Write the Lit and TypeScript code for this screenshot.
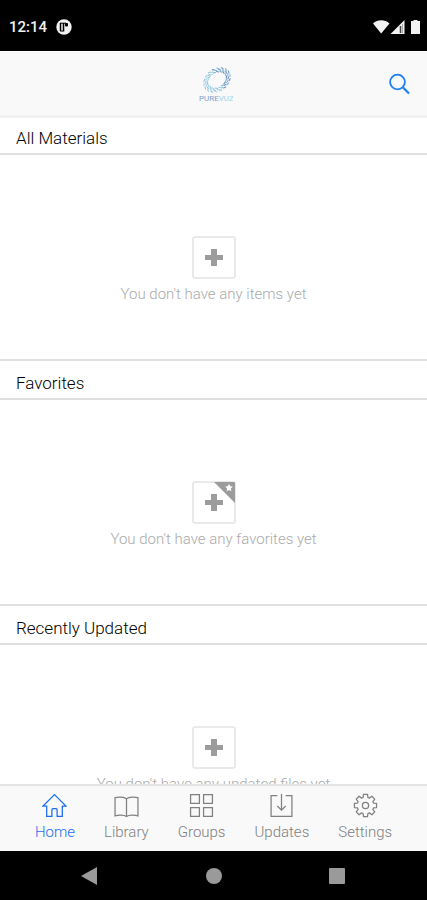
import { LitElement, html, css, svg } from "lit";
import { customElement, property, state } from "lit/decorators.js";
import { classMap } from "lit/directives/class-map.js";

const gearPath = (() => {
  const points: string[] = [];
  const teeth = 8;
  for (let i = 0; i < teeth; i++) {
    const mid = (i * 2 * Math.PI) / teeth - Math.PI / 2;
    for (const [r, a] of [[8, -0.3], [10.8, -0.18], [10.8, 0.18], [8, 0.3]]) {
      points.push(`${(12 + r * Math.cos(mid + a)).toFixed(2)} ${(12 + r * Math.sin(mid + a)).toFixed(2)}`);
    }
  }
  return `M${points.join("L")}Z`;
})();

const tabs = [
  { label: "Home", icon: svg`<path d="M1 12.500 12 1.500l11 11H19.500V22.500h-5v-6.500a1 1 0 0 0-1-1h-3a1 1 0 0 0-1 1v6.500H4.500v-10z"/>` },
  { label: "Library", icon: svg`<path d="M12 5.500C9.500 3.600 4 3.600 1 4.500v17.500c3-1 8.500-1 11 .5 2.500-1.500 8-1.500 11-.5V4.500c-3-.9-8.500-.9-11 1zV22"/>` },
  { label: "Groups", icon: svg`<path d="M1.500 1.500h8.500v8.500H1.500zM14 1.500h8.500v8.500H14zM1.500 14h8.500v8.500H1.500zM14 14h8.500v8.500H14z"/>` },
  { label: "Updates", icon: svg`<path d="M8 2.500H2v20h20v-20H16M12 1v15.500M8 12.500l4 4 4-4"/>` },
  { label: "Settings", icon: svg`<path d="${gearPath}" stroke-linejoin="round"/><circle cx="12" cy="12" r="3"/>` },
];

@customElement("empty-section")
export class EmptySection extends LitElement {
  @property() heading = "";
  @property() message = "";
  @property({ type: Boolean }) starred = false;

  static styles = css`
    :host { display: block; }
    .title {
      margin: 0;
      padding: 7px 16px 0;
      line-height: 30px;
      font-size: 17px;
      font-weight: 300;
      color: #000;
      border-top: 2px solid #e0e0e0;
      border-bottom: 2px solid #e0e0e0;
    }
    :host(:first-of-type) .title { border-top: 0; padding-top: 5px; }
    .body {
      height: 204px;
      box-sizing: border-box;
      padding-top: 81px;
      display: flex;
      flex-direction: column;
      align-items: center;
      gap: 5px;
    }
    .add { border: 0; padding: 0; background: none; height: 43px; display: block; }
    .add svg { display: block; }
    .message { margin: 0; font-size: 15px; line-height: 20px; font-weight: 300; color: #aaa; }
  `;

  render() {
    return html`
      <h2 class="title">${this.heading}</h2>
      <div class="body">
        <button class="add" aria-label="Add to ${this.heading}">
          <svg width="44" height="43" viewBox="0 0 44 43">
            <rect x="1" y="1" width="42" height="41" rx="2" fill="#fff" stroke="#e4e4e4" stroke-width="1.500"/>
            <path d="M19 13h6v6h6v5h-6v6h-6v-6h-6v-5h6z" fill="#9c9c9c"/>
            ${this.starred
              ? svg`<path d="M22 1h20a1 1 0 0 1 1 1v20z" fill="#9c9c9c"/>
                  <path d="M37 2.800l1.200 2.400 2.700.4-2 1.900.5 2.700-2.400-1.300-2.400 1.300.5-2.700-2-1.900 2.700-.4z" fill="#fff"/>`
              : ""}
          </svg>
        </button>
        <p class="message">${this.message}</p>
      </div>
    `;
  }
}

@customElement("app-root")
export class AppRoot extends LitElement {
  @state() private active = "Home";

  static styles = css`
    :host {
      display: flex;
      flex-direction: column;
      height: 100vh;
      background: #fff;
      font-family: Roboto, "Liberation Sans", sans-serif;
    }
    button { border: 0; padding: 0; background: none; font: inherit; color: inherit; }
    svg { display: block; }
    .status {
      flex: none;
      height: 51px;
      box-sizing: border-box;
      padding: 2px 6px 0 9px;
      display: flex;
      align-items: center;
      background: #000;
      color: #f2f2f2;
    }
    .time { font-size: 15px; font-weight: 500; margin-right: 9px; }
    .signals { margin-left: auto; }
    .header {
      flex: none;
      height: 67px;
      box-sizing: border-box;
      padding: 0 17px;
      display: grid;
      grid-template-columns: 1fr auto 1fr;
      align-items: center;
      background: #f9f9f9;
      border-top: 1px solid #fff;
      border-bottom: 3px solid #f1f1f1;
    }
    .logo { grid-column: 2; }
    .search { justify-self: end; color: #2080f5; }
    .content { flex: 1; min-height: 0; overflow-y: auto; scrollbar-width: none; }
    .tabs {
      flex: none;
      height: 67px;
      box-sizing: border-box;
      padding-top: 7px;
      display: flex;
      justify-content: center;
      gap: 29px;
      background: #f9f9f9;
      border-top: 2px solid #e4e4e4;
    }
    .tab {
      display: flex;
      flex-direction: column;
      align-items: center;
      gap: 4px;
      height: 50px;
      font-size: 15px;
      line-height: 20px;
      font-weight: 300;
      color: #808080;
    }
    .active { color: #1a6df5; }
    .system {
      flex: none;
      height: 49px;
      padding: 0 81px;
      display: flex;
      justify-content: space-between;
      align-items: center;
      background: #000;
      color: #9a9a9a;
    }
  `;

  private renderLogo() {
    const blues = ["#3f6fae", "#5b9fd0", "#8cc9e2", "#6fb3d8"];
    const rings = [14.5, 12.5, 10.5].map((r, ring) =>
      Array.from({ length: 18 }, (_, i) => {
        const a = ((i + ring * 0.45) * Math.PI) / 9;
        const dark = Math.cos(a) > 0.1 ? blues[(i + ring) % 2] : blues[2 + ((i + ring) % 2)];
        const x = r * Math.cos(a);
        const y = r * 0.76 * Math.sin(a);
        return svg`<path d="M${x.toFixed(1)} ${y.toFixed(1)}l${(-2.2 * Math.sin(a + 0.4)).toFixed(1)} ${(2.2 * Math.cos(a + 0.4)).toFixed(1)}" stroke="${dark}"/>`;
      })
    );
    return html`
      <svg class="logo" width="38" height="36" viewBox="0 0 38 36" role="img" aria-label="PUREVUZ">
        <g transform="translate(22 14) rotate(-38)" stroke-width="1.100" stroke-linecap="round" opacity="0.75">${rings}</g>
        <text x="4" y="35" font-size="8" font-family="Roboto, sans-serif" fill="#7fa3cb">PURE<tspan fill="#9fd3ea">VUZ</tspan></text>
      </svg>
    `;
  }

  render() {
    return html`
      <div class="status">
        <span class="time">12:14</span>
        <svg width="16" height="16" viewBox="0 0 16 16">
          <circle cx="8" cy="8" r="7.700" fill="#f2f2f2"/>
          <path d="M4.500 4v8M7.500 12.500V4" fill="none" stroke="#000" stroke-width="1.500"/>
          <path d="M4 4.200h6M4 12h3" stroke="#000" stroke-width="1"/>
          <rect x="9" y="4" width="3" height="3.500" rx="1" fill="#000"/>
        </svg>
        <svg class="signals" width="48" height="16" viewBox="0 0 48 16" fill="#f2f2f2">
          <path d="M0 4.500C4.500.2 12 .2 16.500 4.500L8.200 14.500z"/>
          <path d="M17.500 15 31.500 1v14z"/>
          <path d="M27.500 7v7" stroke="#444" stroke-width="1.500"/>
          <path d="M29.500 5v9" stroke="#aaa" stroke-width="1"/>
          <path d="M38 2h2.500V1h4v1h2.500v13h-9z"/>
        </svg>
      </div>
      <header class="header">
        ${this.renderLogo()}
        <button class="search" aria-label="Search">
          <svg width="22" height="22" viewBox="0 0 22 22" fill="none" stroke="currentColor" stroke-width="1.800">
            <circle cx="9.500" cy="9" r="7.400"/>
            <path d="M14.800 14.300 21 20.500" stroke-width="2.200"/>
          </svg>
        </button>
      </header>
      <main class="content">
        <empty-section heading="All Materials" message="You don't have any items yet"></empty-section>
        <empty-section heading="Favorites" message="You don't have any favorites yet" starred></empty-section>
        <empty-section heading="Recently Updated" message="You don't have any updated files yet"></empty-section>
      </main>
      <nav class="tabs">
        ${tabs.map(
          (tab) => html`
            <button
              class=${classMap({ tab: true, active: tab.label === this.active })}
              @click=${() => (this.active = tab.label)}
            >
              <svg width="25" height="25" viewBox="0 0 24 24" fill="none" stroke="currentColor" stroke-width="1.200">${tab.icon}</svg>
              ${tab.label}
            </button>
          `
        )}
      </nav>
      <div class="system">
        <button aria-label="Back"><svg width="17" height="18" viewBox="0 0 17 18"><path d="M0 9 16 0v18z" fill="currentColor"/></svg></button>
        <button aria-label="Overview home"><svg width="16" height="16" viewBox="0 0 16 16"><circle cx="8" cy="8" r="8" fill="currentColor"/></svg></button>
        <button aria-label="Recent apps"><svg width="17" height="17" viewBox="0 0 17 17"><rect width="16" height="16" y="1" rx="1" fill="currentColor"/></svg></button>
      </div>
    `;
  }
}
